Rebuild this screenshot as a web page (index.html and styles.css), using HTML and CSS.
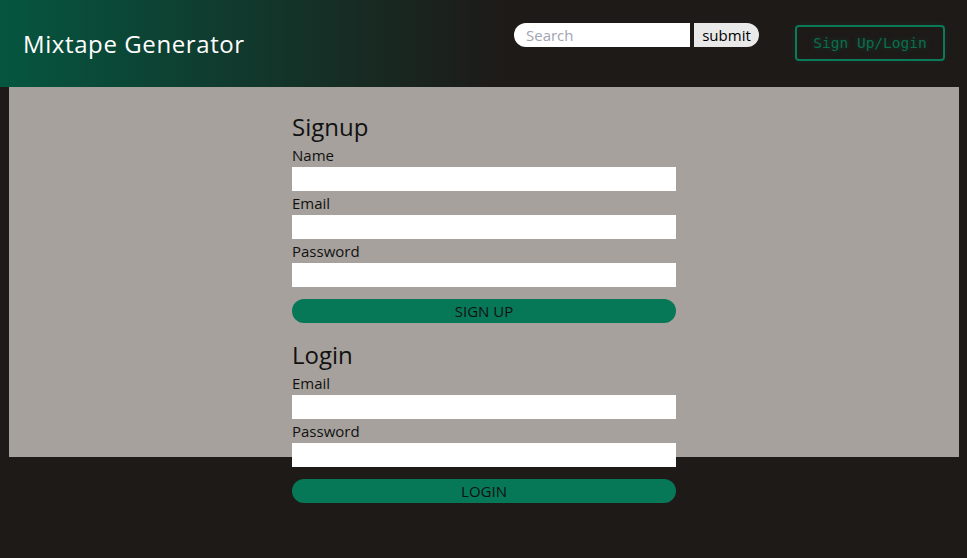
FILE: index.html
```html
<!DOCTYPE html>
<html lang="en">
<head>
<meta charset="utf-8">
<title>Mixtape Generator</title>
<link rel="stylesheet" href="styles.css">
</head>
<body>
<header class="topbar">
  <h1 class="brand">Mixtape Generator</h1>
  <form class="search">
    <input class="search-input" type="text" placeholder="Search">
    <button class="search-submit" type="button">submit</button>
  </form>
  <a class="auth-btn" href="#">Sign Up/Login</a>
</header>
<main class="panel">
  <div class="forms">
    <h2 class="form-title">Signup</h2>
    <label class="field-label">Name</label>
    <input class="field" type="text">
    <label class="field-label">Email</label>
    <input class="field" type="text">
    <label class="field-label">Password</label>
    <input class="field" type="password">
    <button class="action" type="button">SIGN UP</button>

    <h2 class="form-title second">Login</h2>
    <label class="field-label">Email</label>
    <input class="field" type="text">
    <label class="field-label">Password</label>
    <input class="field" type="password">
    <button class="action" type="button">LOGIN</button>
  </div>
</main>
</body>
</html>
```
FILE: styles.css
```css
* { box-sizing: border-box; }
html, body { min-height: 558px; }
body {
  margin: 0;
  background: #1e1a18;
  font-family: "Open Sans", "Noto Sans", sans-serif;
  color: #111;
}
.topbar {
  height: 87px;
  display: flex;
  align-items: flex-start;
  background: linear-gradient(to right, #055640 0%, #1e1a18 52%);
}
.brand {
  margin: 0;
  padding: 28px 0 0 23px;
  font-size: 24px;
  line-height: 32px;
  font-weight: 400;
  color: #fff;
  letter-spacing: 0.6px;
}
.search {
  margin: 23px 0 0 auto;
  display: flex;
  gap: 4px;
}
.search-input {
  width: 176px;
  height: 24px;
  border: none;
  border-radius: 12px 0 0 12px;
  padding: 0 12px;
  font-family: inherit;
  font-size: 15px;
  outline: none;
  background: #fff;
}
.search-input::placeholder { color: #a3a3b3; }
.search-submit {
  width: 65px;
  height: 24px;
  border: none;
  border-radius: 0 12px 12px 0;
  background: #e9e9e9;
  font-family: inherit;
  font-size: 15px;
  color: #000;
  padding: 0;
}
.auth-btn {
  margin: 25px 22px 0 36px;
  width: 150px;
  height: 36px;
  border: 2px solid #0a7a57;
  border-radius: 4px;
  display: flex;
  align-items: center;
  justify-content: center;
  font-family: "DejaVu Sans Mono", "Liberation Mono", monospace;
  font-size: 14.5px;
  color: #0b6e4e;
  text-decoration: none;
  text-shadow: 0 0 6px rgba(10, 122, 87, 0.45);
  box-shadow: 0 0 6px rgba(10, 122, 87, 0.15);
}
.panel {
  margin: 0 8px 0 9px;
  height: 370px;
  background: #a6a19c;
  padding-top: 24px;
}
.forms {
  width: 384px;
  margin: 0 auto;
}
.form-title {
  margin: 0;
  font-size: 24px;
  line-height: 32px;
  font-weight: 400;
  color: #111;
}
.form-title.second { margin-top: 16px; }
.field-label {
  display: block;
  font-size: 15px;
  line-height: 24px;
  color: #111;
}
.field {
  display: block;
  width: 100%;
  height: 24px;
  border: none;
  background: #fff;
  padding: 0 6px;
  outline: none;
}
.action {
  display: block;
  width: 100%;
  height: 24px;
  margin-top: 12px;
  border: none;
  border-radius: 12px;
  background: #077857;
  color: #111;
  font-family: inherit;
  font-size: 15px;
  padding: 0;
}
```
